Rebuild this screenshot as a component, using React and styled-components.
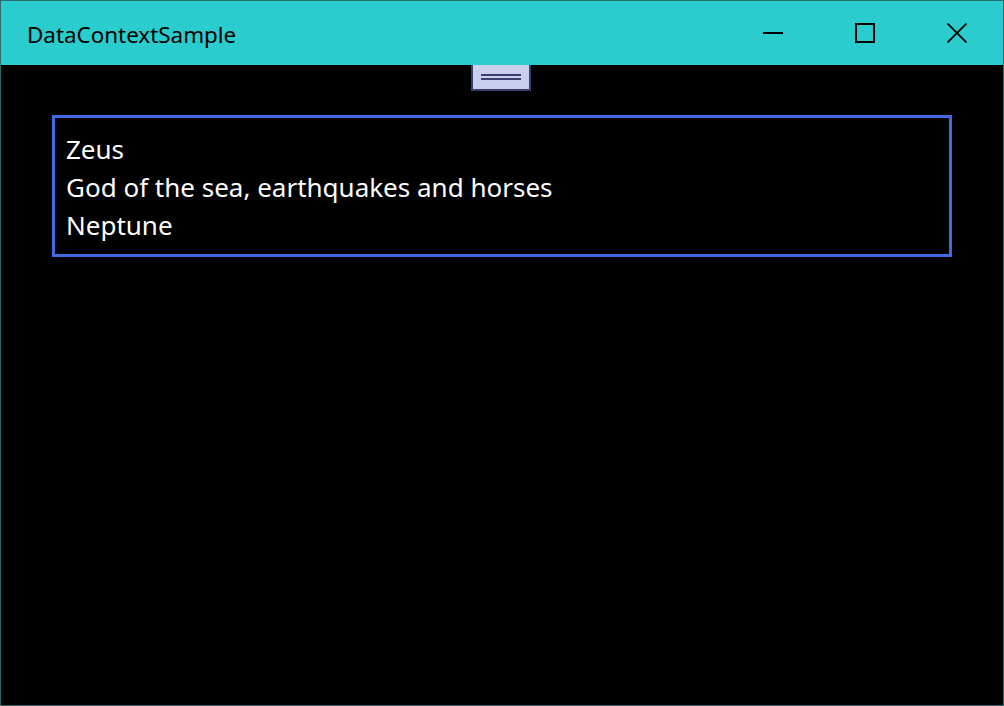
import React from 'react';
import styled, { createGlobalStyle } from 'styled-components';

const GlobalStyle = createGlobalStyle`
    html, body {
        margin: 0;
        padding: 0;
        background: #000;
    }
    * {
        box-sizing: border-box;
    }
`;

const Window = styled.div`
    width: 1004px;
    height: 706px;
    border: 1px solid #2f6b6b;
    background: #000;
    display: flex;
    flex-direction: column;
    font-family: "Segoe UI", "Noto Sans", "Open Sans", sans-serif;
`;

const TitleBar = styled.div`
    height: 64px;
    background: #2accce;
    display: flex;
    align-items: center;
    flex-shrink: 0;
`;

const Title = styled.div`
    flex: 1;
    padding-left: 26px;
    padding-top: 2px;
    font-size: 22.4px;
    color: #000;
`;

const CaptionButton = styled.div`
    width: 92px;
    height: 64px;
    display: flex;
    align-items: center;
    justify-content: center;
`;

const Content = styled.div`
    flex: 1;
    display: flex;
    flex-direction: column;
    align-items: center;
`;

const Grip = styled.div`
    width: 60px;
    height: 26px;
    margin-right: 2px;
    background: #c8d0ee;
    border: 2px solid #3a3f6e;
    border-top: 0;
    display: flex;
    flex-direction: column;
    align-items: center;
    justify-content: center;
    gap: 2px;
`;

const GripLine = styled.div`
    width: 40px;
    height: 2px;
    background: #3a3f6e;
`;

const Card = styled.div`
    align-self: stretch;
    margin: 24px 51px 0;
    border: 3px solid #4169e1;
    padding: 12px 11px 10px;
`;

const Line = styled.div`
    color: #fff;
    font-size: 26px;
    line-height: 38px;
`;

export default function App() {
    return (
        <>
            <GlobalStyle />
            <Window>
                <TitleBar>
                    <Title>DataContextSample</Title>
                    <CaptionButton>
                        <svg width="20" height="20" viewBox="0 0 20 20">
                            <rect x="0" y="9" width="20" height="2" fill="#000" />
                        </svg>
                    </CaptionButton>
                    <CaptionButton>
                        <svg width="20" height="20" viewBox="0 0 20 20">
                            <rect x="1" y="1" width="18" height="18" fill="none" stroke="#000" strokeWidth="2" />
                        </svg>
                    </CaptionButton>
                    <CaptionButton>
                        <svg width="20" height="20" viewBox="0 0 20 20">
                            <path d="M0.5 0.5 L19.5 19.5 M19.5 0.5 L0.5 19.5" stroke="#000" strokeWidth="1.8" />
                        </svg>
                    </CaptionButton>
                </TitleBar>
                <Content>
                    <Grip>
                        <GripLine />
                        <GripLine />
                    </Grip>
                    <Card>
                        <Line>Zeus</Line>
                        <Line>God of the sea, earthquakes and horses</Line>
                        <Line>Neptune</Line>
                    </Card>
                </Content>
            </Window>
        </>
    );
}
